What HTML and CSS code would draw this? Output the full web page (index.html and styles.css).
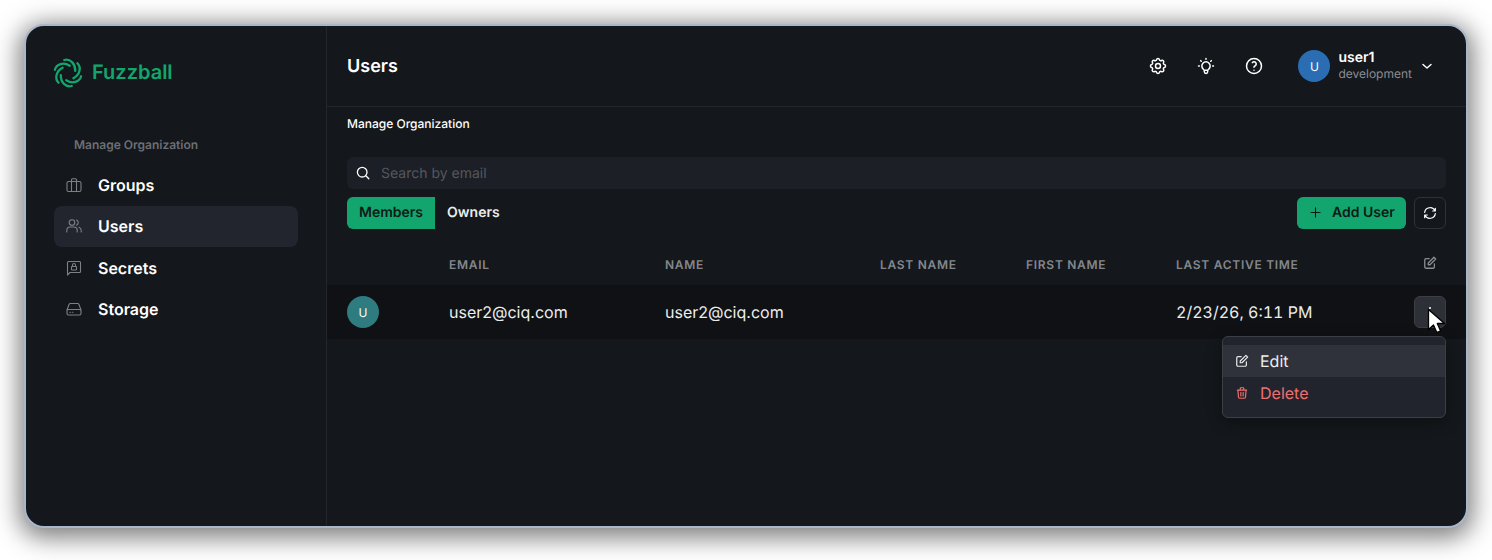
FILE: index.html
```html
<!DOCTYPE html>
<html lang="en">
<head>
<meta charset="utf-8">
<title>Fuzzball Users</title>
<link rel="stylesheet" href="styles.css">
</head>
<body>
<div class="window">
  <aside class="sidebar">
    <div class="logo">
      <svg class="logo-mark" viewBox="-15 -15 30 30" fill="none" stroke="#12a66e" stroke-width="2.300" stroke-linecap="round">
        <path d="M-3.700 -13C2 -14.500 7.500 -9.500 7.200 -2.100"/>
        <path transform="rotate(60)" d="M-3.700 -13C2 -14.500 7.500 -9.500 7.200 -2.100"/>
        <path transform="rotate(120)" d="M-3.700 -13C2 -14.500 7.500 -9.500 7.200 -2.100"/>
        <path transform="rotate(180)" d="M-3.700 -13C2 -14.500 7.500 -9.500 7.200 -2.100"/>
        <path transform="rotate(240)" d="M-3.700 -13C2 -14.500 7.500 -9.500 7.200 -2.100"/>
        <path transform="rotate(300)" d="M-3.700 -13C2 -14.500 7.500 -9.500 7.200 -2.100"/>
      </svg>
      <span class="logo-text">Fuzzball</span>
    </div>
    <div class="nav-label">Manage Organization</div>
    <nav class="nav">
      <a class="nav-item">
        <svg class="nav-icon" viewBox="0 0 16 16" fill="none" stroke="#7c8087" stroke-width="1.100"><rect x="1" y="4.500" width="14" height="10" rx="1.500"/><path d="M5.500 4.500V2.800a1 1 0 0 1 1-1h3a1 1 0 0 1 1 1v1.700M5.500 4.500v10M10.500 4.500v10"/></svg>
        <span>Groups</span>
      </a>
      <a class="nav-item active">
        <svg class="nav-icon" viewBox="0 0 16 16" fill="none" stroke="#7c8087" stroke-width="1.100" stroke-linecap="round"><circle cx="6" cy="4.500" r="2.800"/><path d="M.8 14v-1.500a3.500 3.500 0 0 1 3.500-3.500h3.400a3.500 3.500 0 0 1 3.500 3.500V14M10.500 2a2.800 2.800 0 0 1 0 5.200M13 9.300a3.500 3.500 0 0 1 2.200 3.200V14"/></svg>
        <span>Users</span>
      </a>
      <a class="nav-item">
        <svg class="nav-icon" viewBox="0 0 16 16" fill="none" stroke="#7c8087" stroke-width="1.100" stroke-linejoin="round"><path d="M1.500 15V2.500a1 1 0 0 1 1-1h11a1 1 0 0 1 1 1v9a1 1 0 0 1-1 1H4z"/><rect x="5.500" y="6.500" width="5" height="3.500" rx=".5"/><path d="M6.500 6.500V5a1.500 1.500 0 0 1 3 0v1.500"/></svg>
        <span>Secrets</span>
      </a>
      <a class="nav-item">
        <svg class="nav-icon" viewBox="0 0 16 16" fill="none" stroke="#7c8087" stroke-width="1.100" stroke-linecap="round"><path d="M1 9l2-5.500a1.500 1.500 0 0 1 1.400-1h7.200a1.500 1.500 0 0 1 1.400 1L15 9"/><rect x="1" y="8.500" width="14" height="5.500" rx="1.500"/><path d="M3.800 11.300h.6M6.300 11.300h.6"/></svg>
        <span>Storage</span>
      </a>
    </nav>
  </aside>
  <main class="main">
    <header class="topbar">
      <h1 class="title">Users</h1>
      <div class="top-actions">
        <svg class="top-icon" viewBox="0 0 24 24" fill="none" stroke="#fff" stroke-width="1.800" stroke-linecap="round" stroke-linejoin="round"><path d="M10.300 4.300c.4-1.800 3-1.800 3.400 0a1.700 1.700 0 0 0 2.600 1.100c1.500-.9 3.300.8 2.400 2.400a1.700 1.700 0 0 0 1 2.500c1.800.4 1.800 3 0 3.400a1.700 1.700 0 0 0-1 2.600c.9 1.500-.9 3.300-2.400 2.400a1.700 1.700 0 0 0-2.600 1c-.4 1.800-3 1.800-3.400 0a1.700 1.700 0 0 0-2.600-1c-1.500.9-3.300-.9-2.400-2.400a1.700 1.700 0 0 0-1-2.600c-1.800-.4-1.800-3 0-3.400a1.700 1.700 0 0 0 1-2.500c-.9-1.600.9-3.300 2.400-2.400 1 .6 2.300.1 2.600-1.100z"/><circle cx="12" cy="12" r="3"/></svg>
        <svg class="top-icon" viewBox="0 0 24 24" fill="none" stroke="#fff" stroke-width="1.800" stroke-linecap="round" stroke-linejoin="round"><path d="M3 12h1M12 3v1M20 12h1M5.600 5.600l.7.7M18.400 5.600l-.7.7M9 16a5 5 0 1 1 6 0 3.500 3.500 0 0 0-1 3 2 2 0 0 1-4 0 3.500 3.500 0 0 0-1-3M9.700 17h4.600"/></svg>
        <svg class="top-icon" viewBox="0 0 24 24" fill="none" stroke="#fff" stroke-width="1.800" stroke-linecap="round" stroke-linejoin="round"><circle cx="12" cy="12" r="9"/><path d="M12 17v.01M12 13.500a1.500 1.500 0 0 1 1-1.500 2.600 2.600 0 1 0-3-4"/></svg>
        <div class="account">
          <div class="avatar avatar-blue">U</div>
          <div class="account-text">
            <div class="account-name">user1</div>
            <div class="account-org">development</div>
          </div>
          <svg class="chev" viewBox="0 0 16 16" fill="none" stroke="#fff" stroke-width="1.500" stroke-linecap="round" stroke-linejoin="round"><path d="M4 6.500l4 3.500 4-3.500"/></svg>
        </div>
      </div>
    </header>
    <div class="content">
      <div class="crumb">Manage Organization</div>
      <div class="search">
        <svg class="search-icon" viewBox="0 0 14 14" fill="none" stroke="#fff" stroke-width="1.300" stroke-linecap="round"><circle cx="6.200" cy="6.200" r="4.800"/><path d="M9.800 9.800l3 3"/></svg>
        <span>Search by email</span>
      </div>
      <div class="toolbar">
        <div class="tabs">
          <span class="tab tab-on">Members</span>
          <span class="tab">Owners</span>
        </div>
        <div class="tool-actions">
          <span class="add-btn">
            <svg class="plus" viewBox="0 0 12 12" fill="none" stroke="#0e1a16" stroke-width="1.200" stroke-linecap="round"><path d="M6 1v10M1 6h10"/></svg>
            Add User
          </span>
          <span class="icon-btn">
            <svg class="refresh" viewBox="0 0 24 24" fill="none" stroke="#fff" stroke-width="1.800" stroke-linecap="round" stroke-linejoin="round"><g transform="matrix(-1 0 0 1 24 0)"><path d="M20 11A8.100 8.100 0 0 0 4.500 9M4 5v4h4M4 13a8.100 8.100 0 0 0 15.500 2M20 19v-4h-4"/></g></svg>
          </span>
        </div>
      </div>
      <div class="table-head">
        <span></span>
        <span>EMAIL</span>
        <span>NAME</span>
        <span>LAST NAME</span>
        <span>FIRST NAME</span>
        <span>LAST ACTIVE TIME</span>
        <span class="head-edit">
          <svg class="edit-ico" viewBox="0 0 16 16" fill="none" stroke="#8a8e94" stroke-width="1.500" stroke-linecap="round" stroke-linejoin="round"><path d="M7 3H3.500A1.500 1.500 0 0 0 2 4.500v8A1.500 1.500 0 0 0 3.500 14h8a1.500 1.500 0 0 0 1.500-1.500V9"/><path d="M6 10V8l6.500-6.500 2 2L8 10z"/></svg>
        </span>
      </div>
    </div>
    <div class="table-row">
      <div class="avatar avatar-teal">U</div>
      <span>user2@ciq.com</span>
      <span>user2@ciq.com</span>
      <span></span>
      <span></span>
      <span class="date">2/23/26, 6:11 PM</span>
      <span class="kebab"><i></i></span>
    </div>
    <div class="menu">
      <div class="menu-item hover">
        <svg class="menu-ico" viewBox="0 0 16 16" fill="none" stroke="#e8e9eb" stroke-width="1.400" stroke-linecap="round" stroke-linejoin="round"><path d="M7 3H3.500A1.500 1.500 0 0 0 2 4.500v8A1.500 1.500 0 0 0 3.500 14h8a1.500 1.500 0 0 0 1.500-1.500V9"/><path d="M6 10V8l6.500-6.500 2 2L8 10z"/></svg>
        <span>Edit</span>
      </div>
      <div class="menu-item danger">
        <svg class="menu-ico" viewBox="0 0 24 24" fill="none" stroke="#ef6f70" stroke-width="2" stroke-linecap="round" stroke-linejoin="round"><path d="M4 7h16M10 11v6M14 11v6M5 7l1 12a2 2 0 0 0 2 2h8a2 2 0 0 0 2-2l1-12M9 7V4a1 1 0 0 1 1-1h4a1 1 0 0 1 1 1v3"/></svg>
        <span>Delete</span>
      </div>
    </div>
    <svg class="cursor" viewBox="0 0 24 28"><path d="M1.500 1.500v20l5-4.500 3.300 7.500 3.800-1.600-3.300-7.400h7.200z" fill="#fff" stroke="#000" stroke-width="1.300" stroke-linejoin="round"/></svg>
  </main>
</div>
</body>
</html>
```
FILE: styles.css
```css
* { box-sizing: border-box; }
html, body { margin: 0; height: 560px; overflow: hidden; }
body {
  background: #fff;
  padding: 24px 24px 32px 24px;
  font-family: Inter, "Liberation Sans", sans-serif;
  color: #fff;
  text-rendering: geometricPrecision;
}
.window {
  position: relative;
  width: 1444px;
  height: 504px;
  display: flex;
  background: #14171b;
  border: 2px solid #a9b6ca;
  border-radius: 20px;
  box-shadow: 0 5px 24px 5px rgba(0, 0, 0, 0.5);
  overflow: hidden;
}
.sidebar {
  width: 301px;
  flex: none;
  border-right: 1px solid #23262c;
  padding: 28px 28px 0 28px;
}
.logo { display: flex; align-items: center; gap: 9px; height: 36px; margin-left: -1px; }
.logo-mark { width: 30px; height: 30px; flex: none; margin-top: 2px; }
.logo-text { font-size: 20px; font-weight: 600; color: #12a66e; }
.nav-label {
  margin: 46px 0 0 20px;
  font-size: 12px;
  line-height: 18px;
  font-weight: 600;
  color: #6b6f76;
}
.nav { margin-top: 10px; display: flex; flex-direction: column; }
.nav-item {
  display: flex;
  align-items: center;
  gap: 16px;
  height: 41.500px;
  padding-left: 12px;
  border-radius: 8px;
  font-size: 16px;
  font-weight: 600;
}
.nav-item.active { background: #22252e; }
.nav-icon { width: 16px; height: 16px; flex: none; }
.main { position: relative; flex: 1; min-width: 0; }
.topbar {
  height: 81px;
  border-bottom: 1px solid #23262c;
  padding: 0 20px;
  display: flex;
  align-items: center;
  justify-content: space-between;
}
.title { margin: 0; font-size: 18px; font-weight: 600; }
.top-actions { display: flex; align-items: center; }
.top-icon { width: 20px; height: 20px; flex: none; margin-right: 28px; }
.account { display: flex; align-items: center; margin-left: 6px; }
.avatar {
  width: 32px;
  height: 32px;
  flex: none;
  border-radius: 50%;
  display: flex;
  align-items: center;
  justify-content: center;
  font-size: 12px;
  font-weight: 400;
}
.avatar-blue { background: #2a6db3; }
.avatar-teal { background: #2e7b80; }
.account-text { margin-left: 8px; }
.account-name { font-size: 14px; line-height: 16px; font-weight: 600; }
.account-org { font-size: 12px; line-height: 16px; color: #8a8d93; }
.chev { width: 16px; height: 16px; margin-left: 7px; margin-right: 11px; }
.content { padding: 0 20px; }
.crumb { margin-top: 9px; font-size: 12px; line-height: 16px; font-weight: 500; }
.search {
  margin-top: 25px;
  height: 32px;
  display: flex;
  align-items: center;
  gap: 11px;
  padding-left: 9px;
  background: #1c1f25;
  border-radius: 6px;
  font-size: 14px;
  color: #55585f;
}
.search-icon { width: 14px; height: 14px; flex: none; }
.toolbar { margin-top: 8px; display: flex; justify-content: space-between; align-items: center; }
.tabs { display: flex; }
.tab {
  height: 32px;
  padding: 0 12px 1px;
  display: flex;
  align-items: center;
  font-size: 14px;
  font-weight: 600;
  color: #eceded;
}
.tab-on { background: #12a66e; color: #0e1a16; border-radius: 6px 0 0 6px; }
.tool-actions { display: flex; gap: 8px; }
.add-btn {
  height: 32px;
  width: 109px;
  padding: 0 0 1px 2px;
  display: flex;
  align-items: center;
  justify-content: center;
  gap: 11px;
  background: #12a66e;
  color: #0e1a16;
  border-radius: 6px;
  font-size: 14px;
  font-weight: 600;
}
.plus { width: 11px; height: 11px; }
.icon-btn {
  width: 32px;
  height: 32px;
  display: flex;
  align-items: center;
  justify-content: center;
  border: 1px solid #2f3238;
  border-radius: 6px;
}
.refresh { width: 16px; height: 16px; }
.table-head, .table-row {
  display: grid;
  grid-template-columns: 102px 216px 215px 146px 150px 1fr 32px;
  align-items: center;
}
.table-head {
  height: 56px;
  padding-top: 14px;
  font-size: 12px;
  font-weight: 600;
  letter-spacing: 0.72px;
  color: #83878d;
}
.head-edit { display: flex; justify-content: center; margin-top: -2px; }
.edit-ico { width: 14px; height: 14px; }
.table-row {
  height: 54px;
  padding: 0 20px;
  background: #0f1114;
  font-size: 16px;
  color: #eceded;
}
.table-row .avatar { color: #fff; }
.date { font-variant-numeric: tabular-nums; }
.kebab {
  position: relative;
  display: block;
  width: 32px;
  height: 32px;
  background: #2d3036;
  border: 1px solid #3b3e44;
  border-radius: 6px;
}
.kebab i {
  position: absolute;
  left: 14px;
  top: 10px;
  width: 2px;
  height: 2px;
  border-radius: 50%;
  background: #fff;
}
.menu {
  position: absolute;
  top: 310px;
  right: 20px;
  width: 224px;
  height: 82px;
  padding: 8px 0;
  background: #21242c;
  border: 1px solid #3c3f46;
  border-radius: 6px;
  box-shadow: 0 4px 16px rgba(0, 0, 0, 0.3);
}
.menu-item {
  height: 32px;
  display: flex;
  align-items: center;
  gap: 11px;
  padding-left: 12px;
  font-size: 16px;
  color: #eceded;
}
.menu-item.hover { background: #2f323b; }
.menu-item.danger { color: #ef6f70; }
.menu-ico { width: 14px; height: 14px; flex: none; }
.cursor {
  position: absolute;
  left: 1100px;
  top: 282px;
  width: 24px;
  height: 28px;
}
```
